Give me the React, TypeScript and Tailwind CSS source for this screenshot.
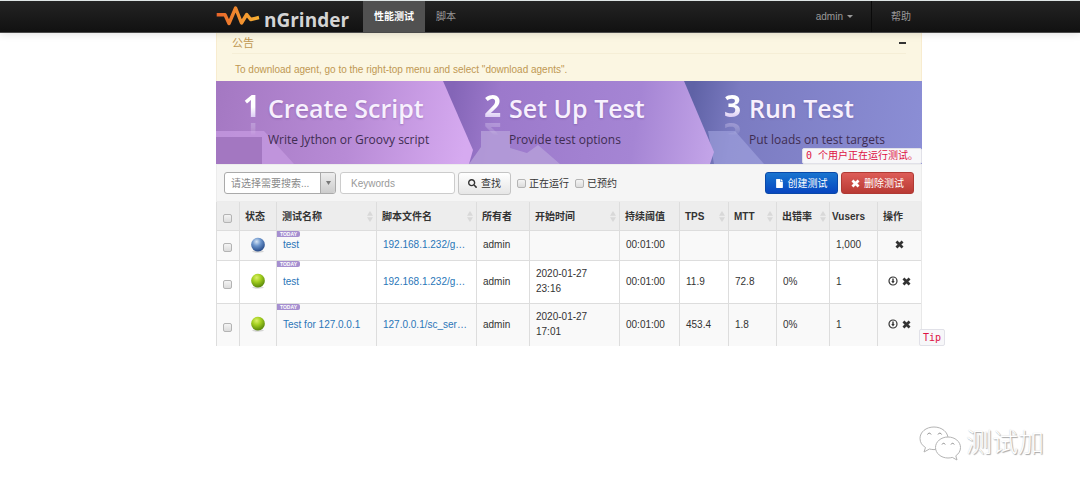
import type { ReactNode } from "react";
import { FaFile, FaSearch } from "react-icons/fa";

type Run = {
  id: number;
  ready: boolean;
  name: string;
  script: string;
  owner: string;
  start: string[];
  duration: string;
  tps: string;
  mtt: string;
  errors: string;
  vusers: string;
};

const runs: Run[] = [
  { id: 1, ready: true, name: "test", script: "192.168.1.232/g…", owner: "admin", start: [], duration: "00:01:00", tps: "", mtt: "", errors: "", vusers: "1,000" },
  { id: 2, ready: false, name: "test", script: "192.168.1.232/g…", owner: "admin", start: ["2020-01-27", "23:16"], duration: "00:01:00", tps: "11.9", mtt: "72.8", errors: "0%", vusers: "1" },
  { id: 3, ready: false, name: "Test for 127.0.0.1", script: "127.0.0.1/sc_ser…", owner: "admin", start: ["2020-01-27", "17:01"], duration: "00:01:00", tps: "453.4", mtt: "1.8", errors: "0%", vusers: "1" },
];

const steps = [
  { n: "1", title: "Create Script", text: "Write Jython or Groovy script" },
  { n: "2", title: "Set Up Test", text: "Provide test options" },
  { n: "3", title: "Run Test", text: "Put loads on test targets" },
];

const headers = [
  { label: "状态", sort: false },
  { label: "测试名称", sort: true },
  { label: "脚本文件名", sort: true },
  { label: "所有者", sort: false },
  { label: "开始时间", sort: true },
  { label: "持续阈值", sort: false },
  { label: "TPS", sort: true },
  { label: "MTT", sort: true },
  { label: "出错率", sort: true },
  { label: "Vusers", sort: false },
  { label: "操作", sort: false },
];

const page = "grid grid-cols-[216fr_706fr_158fr]";
const box =
  "block size-[9px] shrink-0 appearance-none rounded-[2px] border border-[#b4b4b4] bg-linear-to-b from-[#f4f4f4] to-[#dcdcdc] checked:bg-[#3b78c4]";

function Cross({ className }: { className: string }) {
  return (
    <svg viewBox="0 0 10 10" className={className} aria-hidden="true">
      <path d="M1.6 1.6 8.4 8.4M8.4 1.6 1.6 8.4" stroke="currentColor" strokeWidth="3" fill="none" />
    </svg>
  );
}

function Report() {
  return (
    <svg viewBox="0 0 10 10" className="size-[10px]" aria-hidden="true">
      <circle cx="5" cy="5" r="4" fill="none" stroke="currentColor" strokeWidth="1.2" />
      <path d="M4.3 2.500h1.400v2.600h1L5 7.400 3.300 5.100h1z" fill="currentColor" />
    </svg>
  );
}

function Ball({ ready }: { ready: boolean }) {
  const id = ready ? "ball-blue" : "ball-green";
  return (
    <svg viewBox="0 0 14 14" className="mx-auto block size-[16px]" role="img" aria-label={ready ? "ready" : "finished"}>
      <defs>
        <radialGradient id={id} cx="0.4" cy="0.28" r="0.7">
          <stop offset="0" stopColor={ready ? "#d5e4f5" : "#dcf06a"} />
          <stop offset="0.45" stopColor={ready ? "#6b94cb" : "#a3cf1f"} />
          <stop offset="1" stopColor={ready ? "#2b4f8c" : "#5c8a0c"} />
        </radialGradient>
      </defs>
      <ellipse cx="7" cy="12.6" rx="5" ry="1.2" fill="#000" opacity="0.15" />
      <circle cx="7" cy="6.7" r="6" fill={`url(#${id})`} />
    </svg>
  );
}

function Sorter() {
  return (
    <svg viewBox="0 0 6 11" className="h-[11px] w-[6px] shrink-0" aria-hidden="true">
      <path d="M3 0 6 4.8H0zM3 11 0 6.2h6z" fill="#d8d8d8" />
    </svg>
  );
}

function Cell({ children, className = "pb-[2px]" }: { children?: ReactNode; className?: string }) {
  return <td className={`border-t border-l border-[#ddd] px-[6px] align-middle ${className}`}>{children}</td>;
}

function Nav() {
  return (
    <header className={`${page} relative z-10 h-[33px] border-t border-b border-t-[#dfe6e6] border-b-[#4a4a4a] bg-linear-to-b from-[#242424] to-[#111] text-[#999] shadow-[0_1px_8px_rgba(0,0,0,0.12)]`}>
      <div className="col-start-2 flex items-stretch">
        <a href="#home" className="mr-[15px] flex w-[132px] items-center gap-[4px]">
          <svg viewBox="0 0 44 24" className="h-[24px] w-[44px] shrink-0" aria-hidden="true">
            <defs>
              <linearGradient id="wave" x1="0" x2="1">
                <stop offset="0" stopColor="#e8642a" />
                <stop offset="1" stopColor="#f9b233" />
              </linearGradient>
            </defs>
            <path d="M0.700 9.800H9L13 18.500 19.600 3 25.500 18 30.700 9.500 34.700 14.500 43 12.500" fill="none" stroke="url(#wave)" strokeWidth="3.400" strokeLinejoin="round" />
          </svg>
          <span className="pt-[6px] font-['Open_Sans',sans-serif] text-[19px] leading-[24px] font-bold text-[#d4d4d4]">nGrinder</span>
        </a>
        <nav className="flex flex-1 items-stretch">
          <a href="#tests" className="flex items-center bg-[#515151] px-[11px] font-bold text-white">性能测试</a>
          <a href="#scripts" className="flex items-center px-[11px]">脚本</a>
          <button type="button" className="ml-auto flex items-center gap-[4px] pr-[18px]">
            admin
            <svg viewBox="0 0 6 3" className="h-[3px] w-[6px]" aria-hidden="true">
              <path d="M0 0h6L3 3z" fill="currentColor" />
            </svg>
          </button>
          <a href="#help" className="flex items-center border-l border-[#0a0a0a] pr-[11px] pl-[19px]">帮助</a>
        </nav>
      </div>
    </header>
  );
}

function Banner() {
  return (
    <section className="relative h-[83px] overflow-hidden font-['Open_Sans',sans-serif]">
      <svg viewBox="0 0 706 83" preserveAspectRatio="none" className="absolute inset-0 size-full" aria-hidden="true">
        <defs>
          <linearGradient id="s1" gradientUnits="userSpaceOnUse" x1="0" y1="10" x2="250" y2="60">
            <stop offset="0" stopColor="#a478c2" />
            <stop offset="0.55" stopColor="#b88bd6" />
            <stop offset="1" stopColor="#d6aaf0" />
          </linearGradient>
          <linearGradient id="s2" gradientUnits="userSpaceOnUse" x1="235" y1="20" x2="498" y2="60">
            <stop offset="0" stopColor="#8465b7" />
            <stop offset="0.18" stopColor="#9c79cb" />
            <stop offset="0.7" stopColor="#a585d4" />
            <stop offset="1" stopColor="#c3a4e8" />
          </linearGradient>
          <linearGradient id="s3" gradientUnits="userSpaceOnUse" x1="475" y1="20" x2="706" y2="60">
            <stop offset="0" stopColor="#5f62a6" />
            <stop offset="0.2" stopColor="#7b7bc1" />
            <stop offset="1" stopColor="#8b8ed5" />
          </linearGradient>
        </defs>
        <rect width="706" height="83" fill="url(#s3)" />
        <path d="M492 50h27l29 33h-50z" fill="#a7a9e4" opacity="0.55" />
        <path d="M0 0H468L498 71 494 83H0z" fill="url(#s2)" />
        <path d="M265 50h29v17l17 5 11-8 22 19h-91l12-17z" fill="#b6a0da" opacity="0.8" />
        <path d="M0 0H227L257 69 253 83H0z" fill="url(#s1)" />
        <path d="M0 50h48l30 33H0z" fill="#c498e0" opacity="0.8" />
        <path d="M0 56h46v27H0z" fill="#a377c1" />
      </svg>
      <ol className="relative grid grid-cols-[241fr_240fr_225fr]">
        {steps.map((s) => (
          <li key={s.n} className="flex pl-[27px] whitespace-nowrap">
            <span className="h-[52px] w-[25px] shrink-0 bg-linear-to-b from-white from-50% to-[#c9b2ec] to-80% bg-clip-text text-[30px] leading-[50px] font-bold text-transparent [-webkit-box-reflect:below_-26px_linear-gradient(transparent_45%,rgba(255,255,255,0.6)_85%)]">{s.n}</span>
            <div>
              <h2 className="pt-[11px] text-[25px] leading-[32px] font-semibold text-[#f7f0fd] [text-shadow:0_1px_2px_rgba(80,40,120,0.3)]">{s.title}</h2>
              <p className="pt-[7px] text-[12px] leading-[18px] text-[#3f2d52]">{s.text}</p>
            </div>
          </li>
        ))}
      </ol>
      <p className="absolute right-0 bottom-0 rounded-[2px] border border-[#e1e1e8] bg-[#f7f7f9] px-[3px] font-['DejaVu_Sans_Mono','Noto_Sans_CJK_SC',monospace] leading-[14px] text-[#d14]">
        0 个用户正在运行测试。
      </p>
    </section>
  );
}

function SearchBar() {
  return (
    <form className="flex h-[38px] items-center border border-[#ececec] bg-[#f5f5f5] px-[7px]" onSubmit={(e) => e.preventDefault()}>
      <div className="relative mr-[4px] h-[22px] w-[112px]">
        <select aria-label="请选择需要搜索..." className="block size-full appearance-none rounded-[3px] border border-[#aaa] bg-white pr-[16px] pl-[6px] text-[#888]">
          <option>请选择需要搜索...</option>
        </select>
        <span className="pointer-events-none absolute inset-y-px right-px flex w-[15px] items-center justify-center rounded-r-[2px] border-l border-[#aaa] bg-linear-to-b from-[#eee] to-[#ccc]">
          <svg viewBox="0 0 5 4" className="h-[4px] w-[5px]" aria-hidden="true">
            <path d="M0 0h5L2.5 4z" fill="#777" />
          </svg>
        </span>
      </div>
      <input type="text" aria-label="Keywords" placeholder="Keywords" className="mr-[3px] h-[22px] w-[115px] rounded-[3px] border border-[#ccc] bg-white px-[10px] placeholder:text-[#999]" />
      <button type="submit" className="mr-[6px] flex h-[23px] w-[53px] items-center justify-center gap-[4px] rounded-[3px] border border-[#c4c4c4] bg-linear-to-b from-white to-[#e6e6e6] whitespace-nowrap text-[#333]">
        <FaSearch className="size-[9px]" />
        查找
      </button>
      <label className="mr-[6px] flex items-center gap-[3px] whitespace-nowrap">
        <input type="checkbox" className={box} />
        正在运行
      </label>
      <label className="flex items-center gap-[3px] whitespace-nowrap">
        <input type="checkbox" className={box} />
        已预约
      </label>
      <button type="button" className="mr-[3px] ml-auto flex h-[22px] w-[73px] items-center justify-center gap-[5px] rounded-[3px] border border-[#0a49a8] bg-linear-to-b from-[#1a74cf] to-[#0a45c0] whitespace-nowrap text-white">
        <FaFile className="h-[9px] w-[7px]" />
        创建测试
      </button>
      <button type="button" className="flex h-[22px] w-[73px] items-center justify-center gap-[4px] rounded-[3px] border border-[#b03a34] bg-linear-to-b from-[#dd5c57] to-[#b93a34] whitespace-nowrap text-white">
        <Cross className="size-[9px]" />
        删除测试
      </button>
    </form>
  );
}

function RunTable() {
  return (
    <div className="relative">
      <table className="w-full table-fixed border-separate border-spacing-0 border-r border-[#e8e8e8] text-left leading-[15px]">
        <colgroup>
          <col className="w-[23px]" />
          <col className="w-[37px]" />
          <col className="w-[100px]" />
          <col className="w-[100px]" />
          <col className="w-[53px]" />
          <col className="w-[90px]" />
          <col className="w-[60px]" />
          <col className="w-[49px]" />
          <col className="w-[48px]" />
          <col className="w-[53px]" />
          <col className="w-[48px]" />
          <col className="w-[44px]" />
        </colgroup>
        <thead>
          <tr className="h-[28px] bg-[#ededed]">
            <th className="border-l border-[#ddd] pt-[5px] pl-[6px]">
              <input type="checkbox" aria-label="全选" className={box} />
            </th>
            {headers.map((h) => (
              <th key={h.label} className={`border-l border-[#ddd] font-bold whitespace-nowrap ${h.label === "Vusers" ? "pl-[2px]" : h.sort ? "pr-[3px] pl-[5px]" : "pl-[5px]"}`}>
                <span className="flex items-center justify-between">
                  {h.label}
                  {h.sort && <Sorter />}
                </span>
              </th>
            ))}
          </tr>
        </thead>
        <tbody>
          {runs.map((r) => (
            <tr key={r.id} className={r.start.length ? "h-[43px] odd:bg-[#f9f9f9]" : "h-[30px] odd:bg-[#f9f9f9]"}>
              <Cell className="pt-[4px]">
                <input type="checkbox" aria-label={r.name} className={box} />
              </Cell>
              <Cell>
                <Ball ready={r.ready} />
              </Cell>
              <Cell className="relative pb-[2px]">
                <span className="absolute top-0 left-0 h-[6px] w-[23px] rounded-r-[2px] bg-[#a68fd0] text-center text-[5px] leading-[6px] font-bold text-white">TODAY</span>
                <a href="#test" className="whitespace-nowrap text-[#2a76b8]">{r.name}</a>
              </Cell>
              <Cell>
                <a href="#script" className="whitespace-nowrap text-[#2a76b8]">{r.script}</a>
              </Cell>
              <Cell>{r.owner}</Cell>
              <Cell>
                {r.start.map((line) => (
                  <span key={line} className="block">{line}</span>
                ))}
              </Cell>
              <Cell>{r.duration}</Cell>
              <Cell>{r.tps}</Cell>
              <Cell>{r.mtt}</Cell>
              <Cell>{r.errors}</Cell>
              <Cell>{r.vusers}</Cell>
              <Cell>
                <span className="flex items-center justify-center gap-[4px]">
                  {!r.ready && (
                    <button type="button" aria-label="report">
                      <Report />
                    </button>
                  )}
                  <button type="button" aria-label="delete">
                    <Cross className="size-[9px]" />
                  </button>
                </span>
              </Cell>
            </tr>
          ))}
        </tbody>
      </table>
      <span className="absolute -right-[23px] bottom-0 rounded-[2px] border border-[#e1e1e8] bg-[#f7f7f9] px-[3px] font-['DejaVu_Sans_Mono',monospace] leading-[15px] text-[#d14]">Tip</span>
    </div>
  );
}

function Watermark() {
  return (
    <footer className="mt-[79px] flex items-center justify-end gap-[4px] pr-[36px]">
      <svg viewBox="0 0 44 36" className="h-[36px] w-[44px]" fill="#fff" stroke="#b4b4b4" strokeWidth="1" strokeLinejoin="round" aria-hidden="true">
        <path d="M16 2C8 2 2 7 2 13.500c0 4 2.200 7 5.500 9L6 27l5.500-3c1.500.4 3 .6 4.500.6 8 0 14-5 14-11.200S24 2 16 2z" />
        <path d="M30 12c-7 0-12.500 4.700-12.500 10.500S23 33 30 33c1.500 0 3-.2 4.300-.6L39 35l-1.200-4.200c3-2 4.700-4.900 4.700-8.300C42.500 16.700 37 12 30 12z" />
        <path d="M9.500 9.500c.6-1.800 3-1.800 3.600 0M20 9.500c.6-1.800 3-1.800 3.600 0M24 19.500c.6-1.600 2.600-1.600 3.200 0M33 19.500c.6-1.600 2.600-1.600 3.200 0" fill="none" stroke="#8c8c8c" />
      </svg>
      <span className="text-[26px] leading-[36px] font-light text-white [text-shadow:1px_1px_1px_#a5a5a5,0_0_1px_#ccc]">测试加</span>
    </footer>
  );
}

export default function App() {
  return (
    <div className="min-h-screen bg-white font-['Liberation_Sans','Noto_Sans_CJK_SC',sans-serif] text-[10px] leading-[15px] text-[#333]">
      <Nav />
      <div className={page}>
        <main className="col-start-2">
          <section className="h-[48px] border-x border-[#f8eccf] bg-[#fbf6e2] px-[15px] text-[#c09853]">
            <div className="flex h-[21px] items-center justify-between border-b border-[#f5eed6]">
              <h1 className="text-[11px]">公告</h1>
              <button type="button" aria-label="collapse" className="flex h-[14px] items-center">
                <span className="block h-[2px] w-[7px] bg-[#333]" />
              </button>
            </div>
            <p className="px-[3px] pt-[8px]">To download agent, go to the right-top menu and select "download agents".</p>
          </section>
          <Banner />
          <SearchBar />
          <RunTable />
        </main>
      </div>
      <Watermark />
    </div>
  );
}
